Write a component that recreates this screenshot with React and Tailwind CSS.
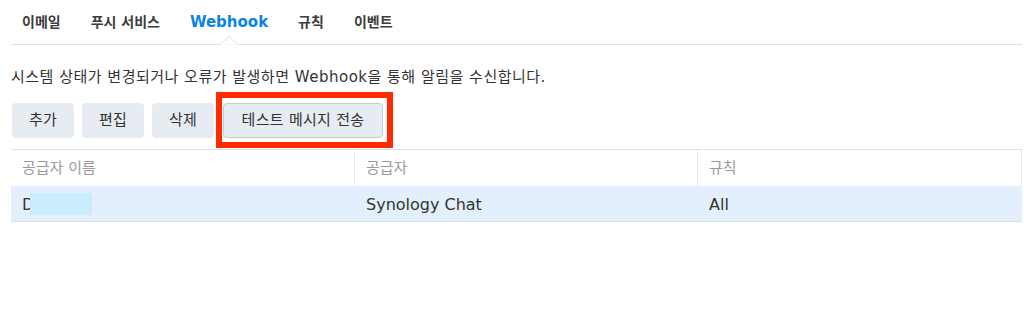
import React from 'react';

const tabs = ['이메일', '푸시 서비스', 'Webhook', '규칙', '이벤트'];
const font = { fontFamily: '"DejaVu Sans", "Noto Sans CJK KR", sans-serif' };

const Tab = ({ label, active }) => (
  <div className={`relative flex items-center h-full px-[11px] pt-[1px] font-bold ${active ? 'text-[15px] text-[#0a84e0]' : 'text-[14px] text-[#3d3d3d]'}`}>
    {label}
    {active && (
      <svg className="absolute left-1/2 -translate-x-1/2 bottom-[-1px]" width="18" height="9" viewBox="0 0 18 9">
        <path d="M0 8.5 L9 0.5 L18 8.5" fill="#fff" stroke="#dce3ea" strokeWidth="1" />
        <rect x="1" y="8.5" width="16" height="1" fill="#fff" />
      </svg>
    )}
  </div>
);

export default function App() {
  return (
    <div className="w-[1024px] h-[332px] bg-white relative pl-[11px] pr-[2px]" style={font}>
      <div className="flex h-[45px] border-b border-[#dce3ea] gap-[8px]">
        {tabs.map((t) => (
          <Tab key={t} label={t} active={t === 'Webhook'} />
        ))}
      </div>

      <p className="mt-[21px] text-[15px] leading-[22px] tracking-[0.5px] text-[#333]">
        시스템 상태가 변경되거나 오류가 발생하면 Webhook을 통해 알림을 수신합니다.
      </p>

      <div className="flex gap-[8px] mt-[15px] pl-[1px]">
        {['추가', '편집', '삭제'].map((b) => (
          <button key={b} className="w-[62px] h-[35px] rounded-[4px] bg-[#e7ecf2] text-[15px] tracking-[0.3px] text-[#333]">
            {b}
          </button>
        ))}
        <button className="ml-[1px] w-[160px] h-[35px] rounded-[4px] bg-[#e7ecf2] border border-[#c3ccd6] text-[15px] tracking-[0.3px] text-[#333]">
          테스트 메시지 전송
        </button>
      </div>

      <div className="mt-[11px] border-t border-[#dce3ea]">
        <div className="grid grid-cols-[344px_343px_324px] h-[36px] text-[15px] text-[#9a9a9a]">
          <div className="flex items-center pl-[11px] border-r border-[#e6ebf0]">공급자 이름</div>
          <div className="flex items-center pl-[11px] border-r border-[#e6ebf0]">공급자</div>
          <div className="flex items-center pl-[11px] border-r border-[#e6ebf0]">규칙</div>
        </div>
        <div className="grid grid-cols-[344px_343px_324px] h-[36px] bg-[#e3effc] border-b border-[#d6e2ee] text-[16px] text-[#333]">
          <div className="flex items-center pl-[11px] pt-[2px]">
            D<span className="inline-block w-[62px] h-[22px] bg-[#c9edfc] -ml-[4px] -mt-[2px]" />
          </div>
          <div className="flex items-center pl-[11px] pt-[2px]">Synology Chat</div>
          <div className="flex items-center pl-[11px] pt-[2px]">All</div>
        </div>
      </div>

      <div className="absolute left-[216px] top-[92px] w-[177px] h-[56px] border-[6px] border-[#ff2a00]" />
    </div>
  );
}
